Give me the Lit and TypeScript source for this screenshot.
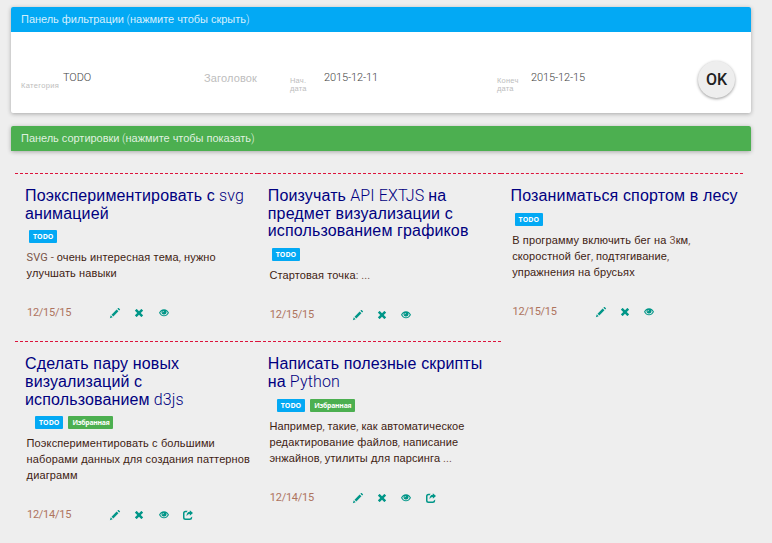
import { LitElement, html, css, svg } from "lit";
import { customElement, property } from "lit/decorators.js";

interface Note {
  title: string[];
  tags: string[];
  inset?: number;
  body: string[];
  date: string;
  share?: boolean;
}

const NOTES: Note[] = [
  {
    title: ["Поэкспериментировать с svg", "анимацией"],
    tags: ["TODO"],
    body: ["SVG - очень интересная тема, нужно", "улучшать навыки"],
    date: "12/15/15",
  },
  {
    title: ["Поизучать API EXTJS на", "предмет визуализации с", "использованием графиков"],
    tags: ["TODO"],
    body: ["Стартовая точка: ..."],
    date: "12/15/15",
  },
  {
    title: ["Позаниматься спортом в лесу"],
    tags: ["TODO"],
    body: ["В программу включить бег на 3км,", "скоростной бег, подтягивание,", "упражнения на брусьях"],
    date: "12/15/15",
  },
  {
    title: ["Сделать пару новых", "визуализаций с", "использованием d3js"],
    tags: ["TODO", "Избранная"],
    inset: 10,
    body: ["Поэкспериментировать с большими", "наборами данных для создания паттернов", "диаграмм"],
    date: "12/14/15",
    share: true,
  },
  {
    title: ["Написать полезные скрипты", "на Python"],
    tags: ["TODO", "Избранная"],
    inset: 9,
    body: ["Например, такие, как автоматическое", "редактирование файлов, написание", "энжайнов, утилиты для парсинга ..."],
    date: "12/14/15",
    share: true,
  },
];

/* Splits a line into Cyrillic and Latin runs, each with its own face. */
const runs = (text: string) =>
  (text.match(/[А-Яа-яё]+(?:[ ]+[А-Яа-яё]+)*|[^А-Яа-яё]+/g) ?? []).map((part) =>
    /[А-Яа-яё]/.test(part) ? html`<span class="cyr">${part}</span>` : html`<span class="lat">${part}</span>`
  );

const ICONS = {
  pencil: svg`<path d="M1011 1210q19 0 33 -13l153 -153q13 -14 13 -33t-13 -33l-99 -92l-214 214l95 96q13 14 32 14zM1013 800l-615 -614l-214 214l614 614zM317 96l-333 -112l110 335z"/>`,
  remove: svg`<path d="M904 1083l178 -179q8 -8 8 -18.5t-8 -17.5l-267 -268l267 -268q8 -7 8 -17.5t-8 -18.5l-178 -178q-8 -8 -18.5 -8t-17.5 8l-268 267l-268 -267q-7 -8 -17.5 -8t-18.5 8l-178 178q-8 8 -8 18.5t8 17.5l267 268l-267 268q-8 7 -8 17.5t8 18.5l178 178q8 8 18.5 8t17.5 -8l268 -267l268 268q7 7 17.5 7t18.5 -7z"/>`,
  eye: svg`<path fill-rule="evenodd" d="M600 1060C300 1060 110 860 0 640C110 420 300 200 600 200S1090 420 1200 640C1090 860 900 1060 600 1060zM150 640C210 740 260 800 320 840C240 560 380 420 600 420S960 560 880 840C940 800 990 740 1050 640C950 460 800 320 600 320S250 460 150 640z"/><circle cx="600" cy="690" r="230"/><path d="M500 880a200 200 0 0 1 -40 -250q30 120 160 120q-110 20 -120 130z" fill="#eee"/>`,
  share: svg`<path d="M560 1100H300Q0 1100 0 800V300Q0 0 300 0H800Q1100 0 1100 300V420L920 270Q910 180 800 180H300Q180 180 180 300V800Q180 920 300 920H440Q490 1020 560 1100zM820 1180L1200 840L820 500V710Q560 700 420 440Q430 960 820 980z"/>`,
};

@customElement("note-icon")
class NoteIcon extends LitElement {
  static styles = css`
    :host { display: block; width: 10px; height: 10px; }
    svg { display: block; width: 10px; height: 10px; overflow: visible; fill: #009688; }
  `;
  @property() name: keyof typeof ICONS = "pencil";
  render() {
    return html`<svg viewBox="0 0 1200 1200"><g transform="matrix(1 0 0 -1 0 1200)">${ICONS[this.name]}</g></svg>`;
  }
}

const faces = css`
  .cyr { font-family: "Liberation Sans", Arial, sans-serif; }
  .lat { font-family: Roboto, sans-serif; font-weight: 300; }
`;

@customElement("note-card")
class NoteCard extends LitElement {
  static styles = [
    faces,
    css`
      :host { display: block; box-sizing: border-box; height: 168.4px; border-top: 1px dashed #dc143c; padding: 13.1px 0 0 10px; white-space: nowrap; }
      .title { color: #000080; font-size: 16px; line-height: 17.6px; letter-spacing: 0.14px; }
      .title div { height: 17.6px; }
      .tags { display: flex; gap: 5px; height: 13px; margin: 8px 0 0 4px; }
      .tag { height: 13px; box-sizing: border-box; padding: 0 4px; border-radius: 1px; background: #03a9f4; color: #fff; font: 700 7px/13px "Open Sans", sans-serif; }
      .tag.fav { background: #4caf50; font-size: 6.8px; letter-spacing: -0.22px; padding-right: 3.5px; }
      .body { margin: 5.9px 0 0 1.6px; font-size: 11px; line-height: 16px; color: #3e2212; letter-spacing: 0.12px; }
      .body div { height: 16px; }
      .body .lat { color: #795548; font-weight: 400; }
      .foot { display: flex; align-items: center; margin: 24px 0 0 2px; height: 16px; }
      .date { width: 83px; color: #a8674e; font: 400 11px/16px Roboto, sans-serif; letter-spacing: -0.26px; opacity: 0.9; }
      .icons { display: flex; gap: 14.3px; }
    `,
  ];
  @property({ attribute: false }) note!: Note;
  render() {
    const n = this.note;
    return html`
      <div class="title">${n.title.map((l) => html`<div>${runs(l)}</div>`)}</div>
      <div class="tags" style="padding-left:${(n.inset ?? 4) - 4}px">
        ${n.tags.map((t, i) => html`<span class="tag ${i ? "fav" : ""}">${t}</span>`)}
      </div>
      <div class="body">${n.body.map((l) => html`<div>${runs(l)}</div>`)}</div>
      <div class="foot">
        <span class="date">${n.date}</span>
        <span class="icons">
          <note-icon name="pencil"></note-icon>
          <note-icon name="remove"></note-icon>
          <note-icon name="eye"></note-icon>
          ${n.share ? html`<note-icon name="share"></note-icon>` : ""}
        </span>
      </div>
    `;
  }
}

@customElement("app-root")
class AppRoot extends LitElement {
  static styles = [
    faces,
    css`
      :host { display: block; box-sizing: border-box; width: 772px; height: 543px; overflow: hidden; padding: 7px 21px 0 11px; background: #eee; font-family: Roboto, sans-serif; white-space: nowrap; }
      .panel { border-radius: 2px; box-shadow: 0 1px 4px rgba(0, 0, 0, 0.3); background: #fff; margin-bottom: 13px; }
      .head { height: 25px; padding-left: 10px; font-size: 11px; line-height: 25px; letter-spacing: -0.03px; color: rgba(255, 255, 255, 0.84); border-radius: 2px 2px 0 0; background: #03a9f4; }
      .head.sort { background: #4caf50; }
      .form { display: grid; grid-template-columns: 42px 141px 86px 34px 173px 34px 167px 37px; height: 81px; box-sizing: border-box; padding: 29px 0 0 10px; align-items: start; }
      .label { font-size: 7.5px; line-height: 8px; color: #bdbdbd; padding-top: 16px; letter-spacing: 0.2px; }
      .label.cat { padding-top: 21px; letter-spacing: 0.35px; }
      .value { font-size: 11px; line-height: 16px; padding-top: 9px; color: #444; letter-spacing: -0.1px; }
      .value.hint { color: #bdbdbd; letter-spacing: 0.15px; }
      .ok { display: grid; place-items: center; width: 37px; height: 37px; padding: 0; border: 0; border-radius: 50%; background: #eee; color: #212121; font: 500 16px Roboto, sans-serif; box-shadow: 0 1px 3px rgba(0, 0, 0, 0.4); }
      .notes { display: grid; grid-template-columns: repeat(3, 242.8px); margin: 22px 0 0 4px; }
    `,
  ];
  render() {
    return html`
      <section class="panel">
        <div class="head">${runs("Панель фильтрации (нажмите чтобы скрыть)")}</div>
        <div class="form">
          <span class="label cat cyr">Категория</span>
          <span class="value lat">TODO</span>
          <span class="value hint cyr">Заголовок</span>
          <span class="label cyr">Нач.<br />дата</span>
          <span class="value lat">2015-12-11</span>
          <span class="label cyr">Конеч<br />дата</span>
          <span class="value lat">2015-12-15</span>
          <button class="ok">OK</button>
        </div>
      </section>
      <section class="panel"><div class="head sort">${runs("Панель сортировки (нажмите чтобы показать)")}</div></section>
      <main class="notes">${NOTES.map((n) => html`<note-card .note=${n}></note-card>`)}</main>
    `;
  }
}
